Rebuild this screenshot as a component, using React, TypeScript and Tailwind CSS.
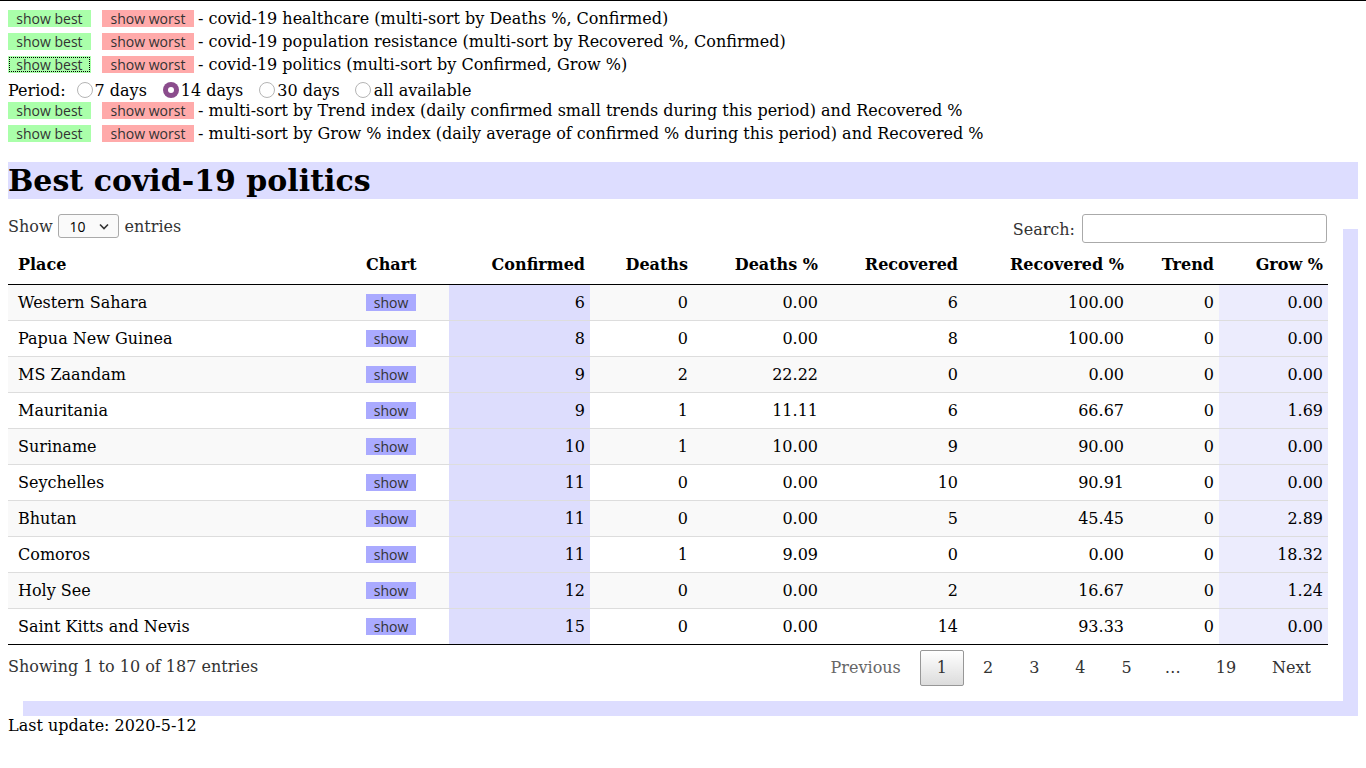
import React from "react";

const rows = [
  ["Western Sahara", "6", "0", "0.00", "6", "100.00", "0", "0.00"],
  ["Papua New Guinea", "8", "0", "0.00", "8", "100.00", "0", "0.00"],
  ["MS Zaandam", "9", "2", "22.22", "0", "0.00", "0", "0.00"],
  ["Mauritania", "9", "1", "11.11", "6", "66.67", "0", "1.69"],
  ["Suriname", "10", "1", "10.00", "9", "90.00", "0", "0.00"],
  ["Seychelles", "11", "0", "0.00", "10", "90.91", "0", "0.00"],
  ["Bhutan", "11", "0", "0.00", "5", "45.45", "0", "2.89"],
  ["Comoros", "11", "1", "9.09", "0", "0.00", "0", "18.32"],
  ["Holy See", "12", "0", "0.00", "2", "16.67", "0", "1.24"],
  ["Saint Kitts and Nevis", "15", "0", "0.00", "14", "93.33", "0", "0.00"],
];

const sans = { fontFamily: '"Open Sans", "DejaVu Sans", sans-serif' } as React.CSSProperties;

function Btns({ focus, text }: { focus?: boolean; text: string }) {
  return (
    <div className="flex h-[23px] items-center whitespace-nowrap">
      <span
        style={sans}
        className={
          "inline-flex h-[17px] w-[83px] items-center justify-center bg-[#aaffaa] text-[14px] leading-none text-[#333] " +
          (focus ? "outline outline-1 outline-dotted outline-offset-[-2px] outline-black" : "")
        }
      >
        show best
      </span>
      <span
        style={sans}
        className="ml-[11px] inline-flex h-[17px] w-[92px] items-center justify-center bg-[#ffaaaa] text-[14px] leading-none text-[#333]"
      >
        show worst
      </span>
      <span className="ml-[4px]">- {text}</span>
    </div>
  );
}

function Radio({ checked }: { checked?: boolean }) {
  return checked ? (
    <span className="inline-flex h-[16px] w-[16px] items-center justify-center rounded-full bg-[#8b4c8c]">
      <span className="h-[6px] w-[6px] rounded-full bg-white" />
    </span>
  ) : (
    <span className="inline-block h-[16px] w-[16px] rounded-full border border-[#b5b5b5] bg-white" />
  );
}

export default function App() {
  const widths = [348, 93, 141, 103, 130, 140, 166, 90, 109];
  const heads = ["Place", "Chart", "Confirmed", "Deaths", "Deaths %", "Recovered", "Recovered %", "Trend", "Grow %"];
  return (
    <div
      className="min-h-[768px] border-t border-black bg-white px-[8px] pt-[6px] text-[16px] leading-[19px] text-black"
      style={{ fontFamily: '"DejaVu Serif", serif' }}
    >
      <Btns text="covid-19 healthcare (multi-sort by Deaths %, Confirmed)" />
      <Btns text="covid-19 population resistance (multi-sort by Recovered %, Confirmed)" />
      <Btns focus text="covid-19 politics (multi-sort by Confirmed, Grow %)" />
      <div className="flex h-[23px] items-center whitespace-nowrap pt-[5px]">
        <span>Period:</span>
        <span className="ml-[11px] flex items-center"><Radio /></span>
        <span className="ml-[2px]">7 days</span>
        <span className="ml-[16px] flex items-center"><Radio checked /></span>
        <span className="ml-[2px]">14 days</span>
        <span className="ml-[16px] flex items-center"><Radio /></span>
        <span className="ml-[2px]">30 days</span>
        <span className="ml-[15px] flex items-center"><Radio /></span>
        <span className="ml-[3px]">all available</span>
      </div>
      <Btns text="multi-sort by Trend index (daily confirmed small trends during this period) and Recovered %" />
      <Btns text="multi-sort by Grow % index (daily average of confirmed % during this period) and Recovered %" />

      <h1 className="mt-[17px] flex h-[37px] items-center bg-[#ddddff] text-[30px] font-bold leading-[37px]">
        Best covid-19 politics
      </h1>

      <div className="mt-[15px] mr-[15px] bg-white pr-[15px] pb-[15px] shadow-[15px_15px_0_0_#ddddff]">
        <div className="flex h-[32px] items-start justify-between text-[#333]">
          <div className="flex h-[24px] items-center">
            <span>Show</span>
            <span
              style={sans}
              className="ml-[5px] flex h-[24px] w-[61px] items-center justify-between rounded-[3px] border border-[#aaa] bg-[#fafafa] pl-[11px] pr-[9px] text-[14px] text-black"
            >
              <span>10</span>
              <svg width="10" height="7" viewBox="0 0 10 7">
                <path d="M1 1.5 L5 5.5 L9 1.5" stroke="#333" strokeWidth="1.6" fill="none" />
              </svg>
            </span>
            <span className="ml-[6px]">entries</span>
          </div>
          <div className="flex h-[29px] items-center">
            <span className="mt-[1px]">Search:</span>
            <span className="ml-[7px] mr-[1px] h-[29px] w-[245px] rounded-[3px] border border-[#aaa] bg-white" />
          </div>
        </div>

        <table className="w-[1320px] table-fixed border-collapse">
          <colgroup>
            {widths.map((w, i) => (
              <col key={i} style={{ width: w }} />
            ))}
          </colgroup>
          <thead>
            <tr className="h-[38px] border-b border-black">
              {heads.map((h, i) => (
                <th
                  key={h}
                  className={
                    "p-0 align-middle font-bold " +
                    (i < 2 ? "pl-[10px] text-left" : "pr-[5px] text-right")
                  }
                >
                  {h}
                </th>
              ))}
            </tr>
          </thead>
          <tbody>
            {rows.map((r, ri) => (
              <tr
                key={ri}
                className={
                  "h-[36px] border-b " +
                  (ri === rows.length - 1 ? "border-black " : "border-[#ddd] ") +
                  (ri % 2 === 0 ? "bg-[#f9f9f9]" : "bg-white")
                }
              >
                <td className="p-0 pl-[10px] align-middle">{r[0]}</td>
                <td className="p-0 pl-[10px] align-middle">
                  <span
                    style={sans}
                    className="inline-flex h-[17px] w-[50px] items-center justify-center bg-[#aaaaff] text-[14px] leading-none text-[#333]"
                  >
                    show
                  </span>
                </td>
                {r.slice(1).map((c, ci) => (
                  <td
                    key={ci}
                    className={
                      "p-0 pr-[5px] text-right align-middle " +
                      (ci === 0 ? "bg-[#ddddfd]" : ci === 6 ? "bg-[#ececfd]" : "")
                    }
                  >
                    {c}
                  </td>
                ))}
              </tr>
            ))}
          </tbody>
        </table>

        <div className="flex w-[1320px] items-start justify-between pt-[5px] text-[#333]">
          <div className="pt-[7px]">Showing 1 to 10 of 187 entries</div>
          <div className="flex items-center">
            <span className="flex h-[36px] items-center border border-transparent px-[16px] text-[#666]">Previous</span>
            <span className="ml-[2px] flex h-[36px] items-center rounded-[2px] border border-[#979797] bg-gradient-to-b from-white to-[#dcdcdc] px-[16px] text-[#333]">
              1
            </span>
            {["2", "3", "4", "5"].map((n) => (
              <span key={n} className="ml-[2px] flex h-[36px] items-center border border-transparent px-[16px]">
                {n}
              </span>
            ))}
            <span className="flex h-[36px] items-center px-[16px]">…</span>
            <span className="ml-[2px] flex h-[36px] items-center border border-transparent px-[16px]">19</span>
            <span className="ml-[2px] flex h-[36px] items-center border border-transparent px-[16px]">Next</span>
          </div>
        </div>
      </div>

      <div className="mt-[15px]">Last update: 2020-5-12</div>
    </div>
  );
}
